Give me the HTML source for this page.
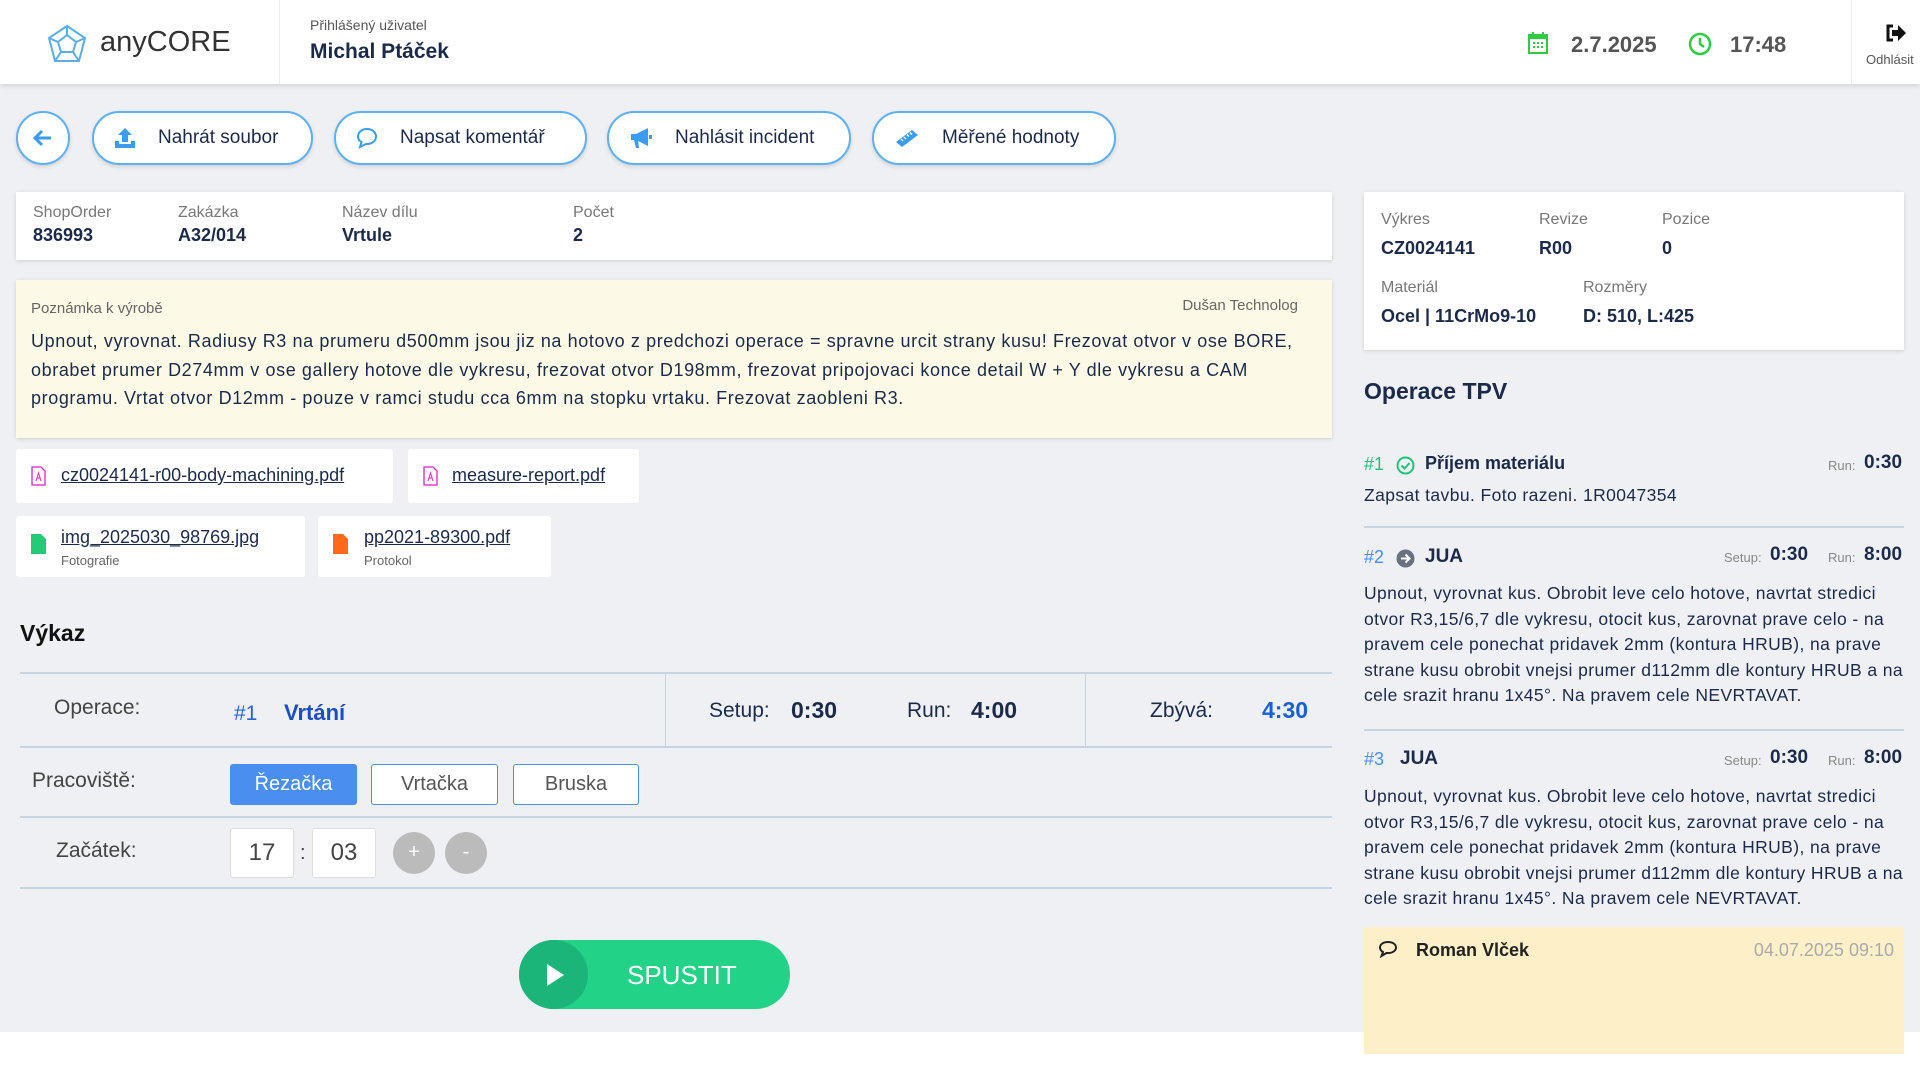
<!DOCTYPE html>
<html><head><meta charset="utf-8">
<style>
*{box-sizing:border-box;margin:0;padding:0}
body{width:1920px;height:1069px;background:#fff;font-family:"Liberation Sans",sans-serif;color:#1c2a4a;position:relative;overflow:hidden}
.a{position:absolute;white-space:nowrap}
.bg{position:absolute;left:0;top:84px;width:1920px;height:948px;background:#eef0f3}
.hdr{position:absolute;left:0;top:0;width:1920px;height:84px;background:#fff;box-shadow:0 2px 5px rgba(0,0,0,.12)}
.btn{position:absolute;top:111px;height:54px;border:2px solid #5cb0f5;border-radius:27px;background:#fff;box-shadow:0 2px 4px rgba(0,0,0,.12);font-size:19px;color:#1c2a4a;display:flex;align-items:center}
.btn svg{margin-left:20px;margin-right:22px}
.card{position:absolute;background:#fff;box-shadow:0 1px 4px rgba(0,0,0,.15)}
.lbl{font-size:16px;color:#777}
.val{font-size:18px;font-weight:bold;color:#1c2a4a}
.file{position:absolute;background:#fff;border-radius:3px}
.file a{color:#1c2a4a;text-decoration:underline;font-size:18px}
.line{position:absolute;height:2px;background:#c9d3e0}
.ws{position:absolute;top:764px;height:41px;border:1.5px solid #4a8ef0;border-radius:3px;background:#fff;font-size:20px;color:#555;text-align:center;line-height:38px}
.desc{font-size:17.5px;line-height:25.6px;color:#1c2a4a;letter-spacing:0.4px}
</style></head><body>
<div class="bg"></div>
<div class="hdr"></div>
<svg class="a" style="left:46px;top:24px" width="42" height="40" viewBox="0 0 42 40"><g fill="none" stroke="#5aaee8" stroke-width="2"><polygon points="21,2 39,14 33,37 9,37 3,14"/><polygon points="21,11 30,18 27,28 15,28 12,18"/><path d="M21 2V11M39 14L30 18M33 37L27 28M9 37L15 28M3 14L12 18"/></g></svg>
<div class="a" style="left:100px;top:26px;font-size:29px;color:#333">anyCORE</div>
<div class="a" style="left:279px;top:0;width:1px;height:84px;background:#eee"></div>
<div class="a" style="left:310px;top:17px;font-size:14px;color:#555">Přihlášený uživatel</div>
<div class="a" style="left:310px;top:40px;font-size:21px;font-weight:bold;color:#1c2a4a">Michal Ptáček</div>
<svg class="a" style="left:1528px;top:32px" width="20" height="22" viewBox="0 0 20 22"><rect x="1" y="3" width="18" height="18" fill="none" stroke="#2ecc40" stroke-width="2"/><rect x="1" y="3" width="18" height="4" fill="#2ecc40"/><rect x="4" y="0" width="2" height="5" fill="#2ecc40"/><rect x="14" y="0" width="2" height="5" fill="#2ecc40"/><g fill="#2ecc40"><rect x="5" y="10" width="2" height="2"/><rect x="9" y="10" width="2" height="2"/><rect x="13" y="10" width="2" height="2"/><rect x="5" y="14" width="2" height="2"/><rect x="9" y="14" width="2" height="2"/><rect x="13" y="14" width="2" height="2"/></g></svg>
<div class="a" style="left:1571px;top:32px;font-size:22px;font-weight:bold;color:#555">2.7.2025</div>
<svg class="a" style="left:1688px;top:32px" width="24" height="24" viewBox="0 0 24 24"><circle cx="12" cy="12" r="10" fill="none" stroke="#2ecc40" stroke-width="2.5"/><path d="M12 6V12L16 15" fill="none" stroke="#2ecc40" stroke-width="2.5"/></svg>
<div class="a" style="left:1730px;top:32px;font-size:22px;font-weight:bold;color:#555">17:48</div>
<div class="a" style="left:1851px;top:0;width:1px;height:84px;background:#eee"></div>
<svg class="a" style="left:1885px;top:24px" width="22" height="18" viewBox="0 0 22 18"><path d="M8 2H3V16H8" fill="none" stroke="#111" stroke-width="3"/><path d="M7 6H13V1L21 9L13 17V12H7Z" fill="#111"/></svg>
<div class="a" style="left:1866px;top:52px;font-size:13px;color:#555">Odhlásit</div>

<div class="btn" style="left:16px;width:54px;justify-content:center"><svg style="margin:0" width="20" height="18" viewBox="0 0 20 18"><path d="M18 9H3M9 2L2 9L9 16" fill="none" stroke="#3a9cf0" stroke-width="3"/></svg></div>
<div class="btn" style="left:92px;width:221px"><svg width="22" height="22" viewBox="0 0 22 22"><path d="M11 1L4 8H8V15H14V8H18Z" fill="#3a9cf0"/><path d="M1 14V21H21V14H17V17H5V14Z" fill="#3a9cf0"/></svg>Nahrát soubor</div>
<div class="btn" style="left:334px;width:253px"><svg width="22" height="22" viewBox="0 0 22 22"><path d="M11 2C5.5 2 2 5.5 2 9.5C2 12 3.5 14 5.5 15L4 20L10 17C10.3 17 10.7 17 11 17C16.5 17 20 13.5 20 9.5C20 5.5 16.5 2 11 2Z" fill="none" stroke="#3a9cf0" stroke-width="2"/></svg>Napsat komentář</div>
<div class="btn" style="left:607px;width:244px"><svg width="24" height="22" viewBox="0 0 24 22"><path d="M2 7H7L19 1V19L7 13H2Z" fill="#3a9cf0"/><path d="M5 13L7 21H10L9 13Z" fill="#3a9cf0"/><rect x="20" y="8" width="3" height="4" fill="#3a9cf0"/></svg>Nahlásit incident</div>
<div class="btn" style="left:872px;width:244px"><svg width="26" height="20" viewBox="0 0 26 20"><path d="M2 14L18 2L24 7L8 19Z" fill="#3a9cf0"/><path d="M7 11L9 13M10 9L12 11M13 6.5L15 8.5M16 4.5L18 6.5" stroke="#fff" stroke-width="1.5"/></svg>Měřené hodnoty</div>

<div class="card" style="left:16px;top:192px;width:1316px;height:68px"></div>
<div class="a lbl" style="left:33px;top:204px">ShopOrder</div><div class="a val" style="left:33px;top:225px">836993</div>
<div class="a lbl" style="left:178px;top:204px">Zakázka</div><div class="a val" style="left:178px;top:225px">A32/014</div>
<div class="a lbl" style="left:342px;top:204px">Název dílu</div><div class="a val" style="left:342px;top:225px">Vrtule</div>
<div class="a lbl" style="left:573px;top:204px">Počet</div><div class="a val" style="left:573px;top:225px">2</div>

<div class="card" style="left:1364px;top:192px;width:540px;height:158px"></div>
<div class="a lbl" style="left:1381px;top:211px">Výkres</div><div class="a val" style="left:1381px;top:238px">CZ0024141</div>
<div class="a lbl" style="left:1539px;top:211px">Revize</div><div class="a val" style="left:1539px;top:238px">R00</div>
<div class="a lbl" style="left:1662px;top:211px">Pozice</div><div class="a val" style="left:1662px;top:238px">0</div>
<div class="a lbl" style="left:1381px;top:279px">Materiál</div><div class="a val" style="left:1381px;top:306px">Ocel | 11CrMo9-10</div>
<div class="a lbl" style="left:1583px;top:279px">Rozměry</div><div class="a val" style="left:1583px;top:306px">D: 510, L:425</div>

<div class="card" style="left:16px;top:280px;width:1316px;height:158px;background:#fcfae6"></div>
<div class="a" style="left:31px;top:300px;font-size:15px;color:#666">Poznámka k výrobě</div>
<div class="a" style="left:1170px;top:297px;font-size:15px;color:#666;width:128px;text-align:right">Dušan Technolog</div>
<div class="a" style="left:31px;top:327px;font-size:18px;line-height:28.5px;color:#1c2a4a;letter-spacing:0.6px">Upnout, vyrovnat. Radiusy R3 na prumeru d500mm jsou jiz na hotovo z predchozi operace = spravne urcit strany kusu! Frezovat otvor v ose BORE,<br>obrabet prumer D274mm v ose gallery hotove dle vykresu, frezovat otvor D198mm, frezovat pripojovaci konce detail W + Y dle vykresu a CAM<br>programu. Vrtat otvor D12mm - pouze v ramci studu cca 6mm na stopku vrtaku. Frezovat zaobleni R3.</div>

<div class="file" style="left:16px;top:449px;width:377px;height:54px"><svg class="a" style="left:15px;top:17px" width="15" height="20" viewBox="0 0 15 20"><path d="M1 1H10L14 5V19H1Z" fill="none" stroke="#e040d0" stroke-width="1.5"/><path d="M5 15L7.5 7L10 15M6 12H9" fill="none" stroke="#e040d0" stroke-width="1.2"/></svg><a class="a" style="left:45px;top:16px">cz0024141-r00-body-machining.pdf</a></div>
<div class="file" style="left:408px;top:449px;width:231px;height:54px"><svg class="a" style="left:15px;top:17px" width="15" height="20" viewBox="0 0 15 20"><path d="M1 1H10L14 5V19H1Z" fill="none" stroke="#e040d0" stroke-width="1.5"/><path d="M5 15L7.5 7L10 15M6 12H9" fill="none" stroke="#e040d0" stroke-width="1.2"/></svg><a class="a" style="left:44px;top:16px">measure-report.pdf</a></div>
<div class="file" style="left:16px;top:516px;width:289px;height:61px"><svg class="a" style="left:15px;top:18px" width="15" height="20" viewBox="0 0 15 20"><path d="M0 0H10L15 5V20H0Z" fill="#22cc77"/></svg><a class="a" style="left:45px;top:11px">img_2025030_98769.jpg</a><div class="a" style="left:45px;top:37px;font-size:13px;color:#666">Fotografie</div></div>
<div class="file" style="left:318px;top:516px;width:233px;height:61px"><svg class="a" style="left:15px;top:18px" width="15" height="20" viewBox="0 0 15 20"><path d="M0 0H10L15 5V20H0Z" fill="#ff6a1a"/></svg><a class="a" style="left:46px;top:11px">pp2021-89300.pdf</a><div class="a" style="left:46px;top:37px;font-size:13px;color:#666">Protokol</div></div>

<div class="a" style="left:20px;top:620px;font-size:23px;font-weight:bold;color:#111">Výkaz</div>
<div class="line" style="left:20px;top:672px;width:1312px"></div>
<div class="line" style="left:20px;top:746px;width:1312px"></div>
<div class="line" style="left:20px;top:816px;width:1312px"></div>
<div class="line" style="left:20px;top:887px;width:1312px"></div>
<div class="a" style="left:665px;top:673px;width:1px;height:74px;background:#c9d3e0"></div>
<div class="a" style="left:1085px;top:673px;width:1px;height:74px;background:#c9d3e0"></div>
<div class="a" style="left:54px;top:696px;font-size:21px;color:#444">Operace:</div>
<div class="a" style="left:234px;top:702px;font-size:21px;color:#2a63d8">#1</div>
<div class="a" style="left:284px;top:700px;font-size:22px;font-weight:bold;color:#1a4fc4">Vrtání</div>
<div class="a" style="left:709px;top:699px;font-size:21px;color:#1c2a4a">Setup:</div>
<div class="a" style="left:791px;top:697px;font-size:23px;font-weight:bold;color:#1c2a4a">0:30</div>
<div class="a" style="left:907px;top:699px;font-size:21px;color:#1c2a4a">Run:</div>
<div class="a" style="left:971px;top:697px;font-size:23px;font-weight:bold;color:#1c2a4a">4:00</div>
<div class="a" style="left:1150px;top:699px;font-size:21px;color:#1c2a4a">Zbývá:</div>
<div class="a" style="left:1262px;top:697px;font-size:23px;font-weight:bold;color:#1a5fd8">4:30</div>
<div class="a" style="left:32px;top:769px;font-size:21px;color:#444">Pracoviště:</div>
<div class="ws" style="left:230px;width:127px;background:#4a8ef0;color:#fff">Řezačka</div>
<div class="ws" style="left:371px;width:127px">Vrtačka</div>
<div class="ws" style="left:513px;width:126px">Bruska</div>
<div class="a" style="left:56px;top:839px;font-size:21px;color:#444">Začátek:</div>
<div class="a" style="left:230px;top:828px;width:64px;height:50px;background:#fff;border:1px solid #ddd;border-radius:3px;font-size:24px;color:#444;text-align:center;line-height:48px">17</div>
<div class="a" style="left:300px;top:842px;font-size:20px;color:#444">:</div>
<div class="a" style="left:312px;top:828px;width:64px;height:50px;background:#fff;border:1px solid #ddd;border-radius:3px;font-size:24px;color:#444;text-align:center;line-height:48px">03</div>
<div class="a" style="left:393px;top:832px;width:42px;height:42px;border-radius:50%;background:#bbb;color:#fff;font-size:20px;text-align:center;line-height:40px">+</div>
<div class="a" style="left:445px;top:832px;width:42px;height:42px;border-radius:50%;background:#bbb;color:#fff;font-size:20px;text-align:center;line-height:40px">-</div>

<div class="a" style="left:519px;top:940px;width:271px;height:69px;border-radius:35px;background:#22d387"></div>
<div class="a" style="left:519px;top:940px;width:69px;height:69px;border-radius:50%;background:#1bb57a"></div>
<svg class="a" style="left:545px;top:963px" width="20" height="24" viewBox="0 0 20 24"><path d="M2 1L19 12L2 23Z" fill="#fff"/></svg>
<div class="a" style="left:627px;top:960px;font-size:26px;color:#fff">SPUSTIT</div>

<div class="a" style="left:1364px;top:378px;font-size:23px;font-weight:bold;color:#1c2a4a">Operace TPV</div>
<div class="a" style="left:1364px;top:454px;font-size:18px;color:#22c07a">#1</div>
<svg class="a" style="left:1396px;top:456px" width="19" height="19" viewBox="0 0 19 19"><circle cx="9.5" cy="9.5" r="8" fill="none" stroke="#22c07a" stroke-width="2"/><path d="M5.5 9.5L8.5 12.5L13.5 7" fill="none" stroke="#22c07a" stroke-width="2"/></svg>
<div class="a" style="left:1425px;top:453px;font-size:18px;font-weight:bold;color:#1c2a4a">Příjem materiálu</div>
<div class="a" style="left:1828px;top:458px;font-size:13px;color:#888">Run:</div>
<div class="a" style="left:1864px;top:452px;font-size:19px;font-weight:bold;color:#1c2a4a">0:30</div>
<div class="a desc" style="left:1364px;top:483px">Zapsat tavbu. Foto razeni. 1R0047354</div>
<div class="line" style="left:1364px;top:526px;width:540px"></div>

<div class="a" style="left:1364px;top:547px;font-size:18px;color:#4a8ef0">#2</div>
<svg class="a" style="left:1396px;top:549px" width="19" height="19" viewBox="0 0 19 19"><circle cx="9.5" cy="9.5" r="9" fill="#6a7280"/><path d="M5 9.5H13M9.5 5.5L13.5 9.5L9.5 13.5" fill="none" stroke="#fff" stroke-width="2"/></svg>
<div class="a" style="left:1425px;top:546px;font-size:19px;font-weight:bold;color:#1c2a4a">JUA</div>
<div class="a" style="left:1724px;top:550px;font-size:13px;color:#888">Setup:</div>
<div class="a" style="left:1770px;top:544px;font-size:19px;font-weight:bold;color:#1c2a4a">0:30</div>
<div class="a" style="left:1828px;top:550px;font-size:13px;color:#888">Run:</div>
<div class="a" style="left:1864px;top:544px;font-size:19px;font-weight:bold;color:#1c2a4a">8:00</div>
<div class="a desc" style="left:1364px;top:581px">Upnout, vyrovnat kus. Obrobit leve celo hotove, navrtat stredici<br>otvor R3,15/6,7 dle vykresu, otocit kus, zarovnat prave celo - na<br>pravem cele ponechat pridavek 2mm (kontura HRUB), na prave<br>strane kusu obrobit vnejsi prumer d112mm dle kontury HRUB a na<br>cele srazit hranu 1x45°. Na pravem cele NEVRTAVAT.</div>
<div class="line" style="left:1364px;top:729px;width:540px"></div>

<div class="a" style="left:1364px;top:749px;font-size:18px;color:#4a8ef0">#3</div>
<div class="a" style="left:1400px;top:748px;font-size:19px;font-weight:bold;color:#1c2a4a">JUA</div>
<div class="a" style="left:1724px;top:753px;font-size:13px;color:#888">Setup:</div>
<div class="a" style="left:1770px;top:747px;font-size:19px;font-weight:bold;color:#1c2a4a">0:30</div>
<div class="a" style="left:1828px;top:753px;font-size:13px;color:#888">Run:</div>
<div class="a" style="left:1864px;top:747px;font-size:19px;font-weight:bold;color:#1c2a4a">8:00</div>
<div class="a desc" style="left:1364px;top:784px">Upnout, vyrovnat kus. Obrobit leve celo hotove, navrtat stredici<br>otvor R3,15/6,7 dle vykresu, otocit kus, zarovnat prave celo - na<br>pravem cele ponechat pridavek 2mm (kontura HRUB), na prave<br>strane kusu obrobit vnejsi prumer d112mm dle kontury HRUB a na<br>cele srazit hranu 1x45°. Na pravem cele NEVRTAVAT.</div>

<div class="a" style="left:1364px;top:927px;width:540px;height:127px;background:#fdf0c8"></div>
<svg class="a" style="left:1378px;top:940px" width="20" height="18" viewBox="0 0 20 18"><path d="M10 2C5 2 2 4.5 2 7.5C2 9.5 3.3 11 5 12L3.5 16L8.5 13C9 13 9.5 13 10 13C15 13 18 10.5 18 7.5C18 4.5 15 2 10 2Z" fill="none" stroke="#222" stroke-width="2"/></svg>
<div class="a" style="left:1416px;top:940px;font-size:18px;font-weight:bold;color:#222">Roman Vlček</div>
<div class="a" style="left:1700px;top:940px;width:194px;text-align:right;font-size:18px;color:#aaa">04.07.2025 09:10</div>
</body></html>
